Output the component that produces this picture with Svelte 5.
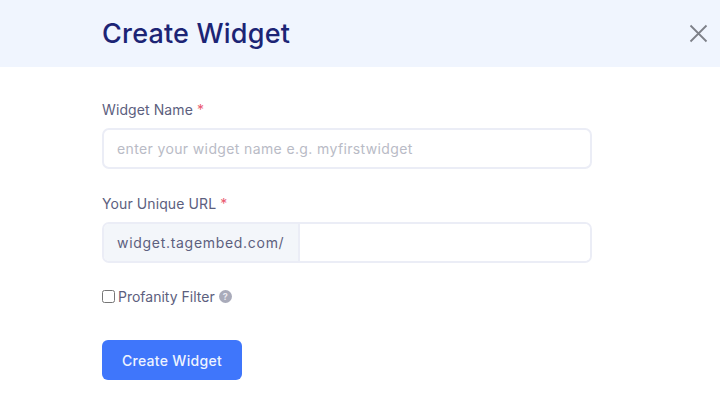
<script lang="ts">
	let widgetName = $state('');
	let slug = $state('');
	let profanity = $state(false);
</script>

<div class="modal">
	<header>
		<h1>Create Widget</h1>
		<button class="close" aria-label="Close">
			<svg width="19" height="19" viewBox="0 0 19 19" fill="none" stroke="#7d8088" stroke-width="1.8">
				<path d="M1.5 1.5l16 16M17.5 1.5l-16 16" />
			</svg>
		</button>
	</header>

	<form onsubmit={(e) => e.preventDefault()}>
		<label class="field">
			<span class="label">Widget Name <em>*</em></span>
			<input class="box" bind:value={widgetName} placeholder="enter your widget name e.g. myfirstwidget" />
		</label>

		<label class="field url">
			<span class="label">Your Unique URL <em>*</em></span>
			<span class="group">
				<span class="addon">widget.tagembed.com/</span>
				<input bind:value={slug} />
			</span>
		</label>

		<div class="check">
			<input type="checkbox" id="profanity" bind:checked={profanity} />
			<label for="profanity">Profanity Filter</label>
			<span class="help">?</span>
		</div>

		<button class="submit" type="submit">Create Widget</button>
	</form>
</div>

<style>
	:global(body) {
		background: #fff;
		font-family: Inter, 'Open Sans', sans-serif;
	}

	.modal {
		height: 409px;
		overflow: hidden;
	}

	header {
		align-items: center;
		background: #f0f5fe;
		display: flex;
		height: 67px;
		justify-content: space-between;
		padding: 0 12px 0 102px;
	}

	h1 {
		color: #1c2475;
		font-size: 27px;
		font-weight: 500;
		letter-spacing: 0.2px;
		margin: 0;
	}

	.close {
		background: none;
		border: 0;
		display: flex;
		padding: 0;
	}

	form {
		display: flex;
		flex-direction: column;
		padding: 33px 0 0 102px;
		width: 490px;
	}

	.field {
		display: flex;
		flex-direction: column;
		gap: 8px;
	}

	.url {
		margin-top: 25px;
	}

	.label {
		color: #5c607e;
		font-size: 14px;
		font-weight: 400;
		letter-spacing: 0.1px;
		line-height: 20px;
	}

	em {
		color: #ea5a70;
		font-style: normal;
	}

	.box,
	.group {
		border: 2px solid #ebedf6;
		border-radius: 7px;
		box-sizing: border-box;
		height: 41px;
	}

	.box {
		color: #565a78;
		font: inherit;
		font-size: 14px;
		letter-spacing: 0.37px;
		outline: none;
		padding: 0 13px;
	}

	.box::placeholder {
		color: #b9bbc6;
	}

	.group {
		display: flex;
		overflow: hidden;
	}

	.addon {
		align-items: center;
		background: #f3f6fa;
		border-right: 2px solid #ebedf6;
		box-sizing: border-box;
		color: #5c607e;
		display: flex;
		flex: 0 0 196px;
		font-size: 14px;
		letter-spacing: 0.7px;
		padding-left: 13px;
	}

	.group input {
		border: 0;
		flex: 1;
		min-width: 0;
		outline: none;
	}

	.check {
		align-items: center;
		display: flex;
		margin-top: 25px;
	}

	.check input {
		height: 13px;
		margin: 0 3px 0 0;
		width: 13px;
	}

	.check label {
		color: #5c607e;
		font-size: 14px;
		font-weight: 400;
	}

	.help {
		background: #a9abba;
		border-radius: 50%;
		color: #e9e9ef;
		font-size: 9px;
		font-weight: 700;
		height: 13px;
		line-height: 13px;
		margin-left: 4px;
		text-align: center;
		width: 13px;
	}

	.submit {
		background: #3f76fb;
		border: 0;
		border-radius: 6px;
		color: #eef3ff;
		font: inherit;
		font-size: 14px;
		font-weight: 500;
		height: 40px;
		letter-spacing: 0.3px;
		margin-top: 35px;
		width: 140px;
	}
</style>
